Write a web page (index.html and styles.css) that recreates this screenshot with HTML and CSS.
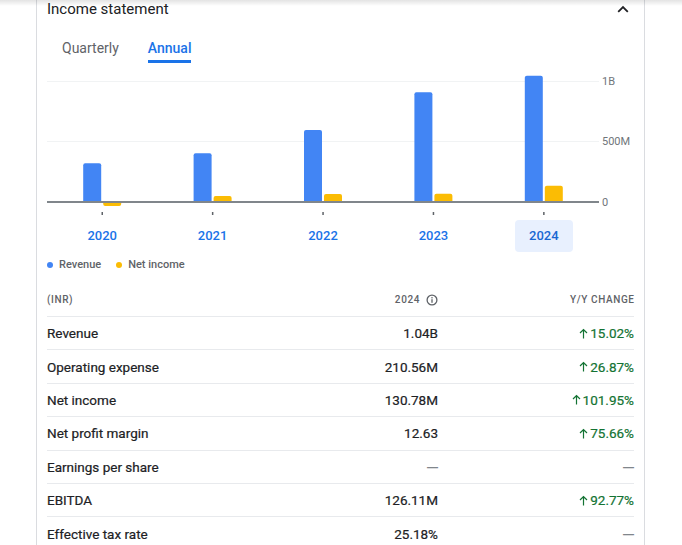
FILE: index.html
```html
<!DOCTYPE html>
<html lang="en">
<head>
<meta charset="utf-8">
<title>Income statement</title>
<link rel="stylesheet" href="styles.css">
</head>
<body>
<div class="topshade"></div>
<section class="card">
  <div class="card-head">
    <h2 class="title">Income statement</h2>
    <svg class="chevron" width="12" height="8" viewBox="0 0 12 8"><path d="M1.2 6.8 L6 2 L10.8 6.8" fill="none" stroke="#202124" stroke-width="1.8"/></svg>
  </div>
  <div class="tabs">
    <span class="tab">Quarterly</span>
    <span class="tab active">Annual</span>
  </div>
  <div class="chart">
    <svg class="plot" width="586" height="157" viewBox="0 0 586 157">
      <line x1="0" y1="18.5" x2="552" y2="18.5" stroke="#f1f3f4" stroke-width="1"/>
      <line x1="0" y1="78.5" x2="552" y2="78.5" stroke="#f1f3f4" stroke-width="1"/>
      <text x="555" y="18.5" class="axis">1B</text>
      <text x="555" y="78.5" class="axis">500M</text>
      <text x="555" y="139" class="axis">0</text>

      <rect x="36.2" y="100.3" width="18" height="39.7" rx="2" fill="#4285f4"/>
      <rect x="56.2" y="138" width="18" height="5" rx="2" fill="#fbbc04"/>

      <rect x="146.6" y="90.3" width="18" height="49.7" rx="2" fill="#4285f4"/>
      <rect x="166.6" y="133" width="18" height="7" rx="2" fill="#fbbc04"/>

      <rect x="257" y="67" width="18" height="73" rx="2" fill="#4285f4"/>
      <rect x="277" y="131" width="18" height="9" rx="2" fill="#fbbc04"/>

      <rect x="367.4" y="29.3" width="18" height="110.7" rx="2" fill="#4285f4"/>
      <rect x="387.4" y="130.7" width="18" height="9.3" rx="2" fill="#fbbc04"/>

      <rect x="477.8" y="12.7" width="18" height="127.3" rx="2" fill="#4285f4"/>
      <rect x="497.8" y="122.7" width="18" height="17.3" rx="2" fill="#fbbc04"/>

      <rect x="0" y="138" width="552" height="2" fill="#80868b"/>

      <rect x="54.5" y="149" width="1.5" height="3" fill="#5f6368"/>
      <rect x="164.9" y="149" width="1.5" height="3" fill="#5f6368"/>
      <rect x="275.3" y="149" width="1.5" height="3" fill="#5f6368"/>
      <rect x="385.7" y="149" width="1.5" height="3" fill="#5f6368"/>
      <rect x="496.1" y="149" width="1.5" height="3" fill="#5f6368"/>
    </svg>
  </div>
  <div class="years">
    <div class="year"><span>2020</span></div>
    <div class="year"><span>2021</span></div>
    <div class="year"><span>2022</span></div>
    <div class="year"><span>2023</span></div>
    <div class="year"><span class="sel">2024</span></div>
  </div>
  <div class="legend">
    <span class="dot dot-blue"></span><span class="leg-label">Revenue</span>
    <span class="dot dot-yellow"></span><span class="leg-label">Net income</span>
  </div>
  <div class="fin">
    <div class="row head">
      <div class="c-label">(INR)</div>
      <div class="c-val"><span>2024</span><svg class="info" width="12" height="12" viewBox="0 0 12 12"><circle cx="6" cy="6" r="4.9" fill="none" stroke="#5f6368" stroke-width="1.3"/><rect x="5.35" y="5.2" width="1.3" height="3.6" fill="#5f6368"/><rect x="5.35" y="3.1" width="1.3" height="1.3" fill="#5f6368"/></svg></div>
      <div class="c-chg">Y/Y change</div>
    </div>
    <div class="row">
      <div class="c-label">Revenue</div>
      <div class="c-val">1.04B</div>
      <div class="c-chg up"><svg class="arrow" width="9" height="11" viewBox="0 0 9 11"><path d="M4.5 10.5 V1.5 M1 5 L4.5 1.5 L8 5" fill="none" stroke="#137333" stroke-width="1.2"/></svg>15.02%</div>
    </div>
    <div class="row">
      <div class="c-label">Operating expense</div>
      <div class="c-val">210.56M</div>
      <div class="c-chg up"><svg class="arrow" width="9" height="11" viewBox="0 0 9 11"><path d="M4.5 10.5 V1.5 M1 5 L4.5 1.5 L8 5" fill="none" stroke="#137333" stroke-width="1.2"/></svg>26.87%</div>
    </div>
    <div class="row">
      <div class="c-label">Net income</div>
      <div class="c-val">130.78M</div>
      <div class="c-chg up"><svg class="arrow" width="9" height="11" viewBox="0 0 9 11"><path d="M4.5 10.5 V1.5 M1 5 L4.5 1.5 L8 5" fill="none" stroke="#137333" stroke-width="1.2"/></svg>101.95%</div>
    </div>
    <div class="row">
      <div class="c-label">Net profit margin</div>
      <div class="c-val">12.63</div>
      <div class="c-chg up"><svg class="arrow" width="9" height="11" viewBox="0 0 9 11"><path d="M4.5 10.5 V1.5 M1 5 L4.5 1.5 L8 5" fill="none" stroke="#137333" stroke-width="1.2"/></svg>75.66%</div>
    </div>
    <div class="row">
      <div class="c-label">Earnings per share</div>
      <div class="c-val"><span class="dash">—</span></div>
      <div class="c-chg"><span class="dash">—</span></div>
    </div>
    <div class="row">
      <div class="c-label">EBITDA</div>
      <div class="c-val">126.11M</div>
      <div class="c-chg up"><svg class="arrow" width="9" height="11" viewBox="0 0 9 11"><path d="M4.5 10.5 V1.5 M1 5 L4.5 1.5 L8 5" fill="none" stroke="#137333" stroke-width="1.2"/></svg>92.77%</div>
    </div>
    <div class="row">
      <div class="c-label">Effective tax rate</div>
      <div class="c-val">25.18%</div>
      <div class="c-chg"><span class="dash">—</span></div>
    </div>
  </div>
</section>
</body>
</html>
```

FILE: styles.css
```css
html, body {
  margin: 0;
  padding: 0;
  background: #ffffff;
  font-family: Roboto, "Liberation Sans", Arial, sans-serif;
  color: #202124;
  overflow: hidden;
}

.topshade {
  position: absolute;
  top: 0;
  left: 0;
  right: 0;
  height: 6px;
  background: linear-gradient(to bottom, rgba(0,0,0,0.11), rgba(0,0,0,0));
  pointer-events: none;
}

.card {
  box-sizing: border-box;
  margin-left: 36px;
  width: 609px;
  height: 545px;
  border-left: 1px solid #dadce0;
  border-right: 1px solid #dadce0;
  padding: 0 10px;
}

.card-head {
  display: flex;
  align-items: center;
  justify-content: space-between;
  height: 18px;
  padding-right: 5px;
}

.title {
  margin: 0;
  font-size: 15px;
  font-weight: 400;
  line-height: 18px;
  color: #202124;
}

.chevron {
  display: block;
  margin-top: -1px;
}

.tabs {
  display: flex;
  margin-top: 22px;
  padding-left: 15px;
  gap: 29px;
}

.tab {
  display: block;
  font-size: 14px;
  font-weight: 400;
  line-height: 16px;
  color: #5f6368;
  padding-bottom: 4px;
  border-bottom: 3px solid transparent;
}

.tab.active {
  color: #1a73e8;
  border-bottom-color: #1a73e8;
  font-weight: 500;
}

.chart {
  height: 157px;
}

.plot {
  display: block;
}

.axis {
  font-size: 11px;
  fill: #70757a;
  dominant-baseline: central;
  font-family: Roboto, "Liberation Sans", sans-serif;
}

.years {
  display: flex;
  width: 552px;
  height: 32px;
}

.year {
  flex: 1;
  display: flex;
  justify-content: center;
}

.year span {
  display: block;
  font-size: 13px;
  font-weight: 500;
  line-height: 32px;
  color: #1a73e8;
  padding: 0 14px;
  border-radius: 4px;
}

.year span.sel {
  background: #e8f0fe;
  color: #1967d2;
}

.legend {
  display: flex;
  align-items: center;
  margin-top: 4px;
  height: 16px;
  font-size: 11px;
  font-weight: 500;
  color: #5f6368;
}

.dot {
  width: 6px;
  height: 6px;
  border-radius: 50%;
  margin-top: 2px;
}

.dot-blue { background: #4285f4; }
.dot-yellow { background: #fbbc04; margin-left: 15px; }

.leg-label {
  margin-left: 6px;
}

.fin {
  margin-top: 11px;
}

.row {
  box-sizing: border-box;
  display: grid;
  grid-template-columns: 1fr 150px 196px;
  align-items: center;
  height: 33.4px;
  border-bottom: 1px solid #e8eaed;
  font-size: 13.5px;
  font-weight: 400;
  color: #202124;
  -webkit-text-stroke: 0.2px #202124;
}

.row.head {
  height: 34px;
  font-size: 10px;
  font-weight: 500;
  letter-spacing: 0.6px;
  text-transform: uppercase;
  color: #5f6368;
  -webkit-text-stroke: 0;
}

.c-label {
  white-space: nowrap;
}

.c-val, .c-chg {
  display: flex;
  justify-content: flex-end;
  align-items: center;
  white-space: nowrap;
}

.row.head .c-val span {
  margin-right: 6px;
}

.row.head .c-chg {
  margin-right: -0.6px;
}

.info {
  display: block;
}

.up {
  color: #137333;
  -webkit-text-stroke: 0.2px #137333;
}

.arrow {
  display: block;
  margin-right: 2px;
}

.dash {
  font-family: "Liberation Sans", Arial, sans-serif;
  font-size: 11px;
  font-weight: 700;
  color: #80868b;
  -webkit-text-stroke: 0;
}
```
